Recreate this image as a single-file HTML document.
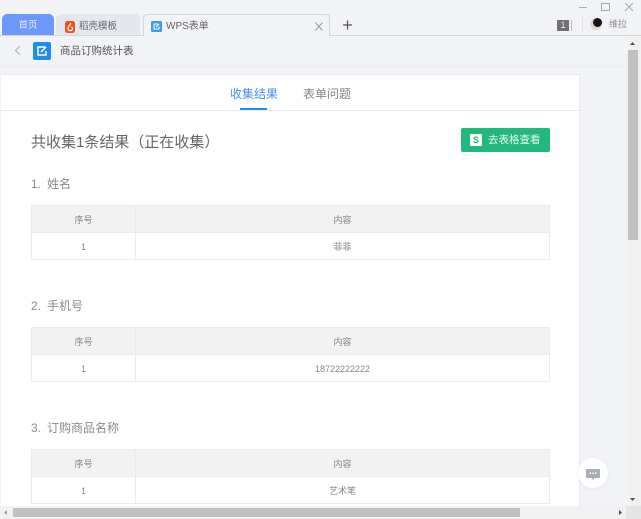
<!DOCTYPE html>
<html lang="zh">
<head>
<meta charset="utf-8">
<style>
html,body{margin:0;padding:0;width:641px;height:519px;overflow:hidden;background:#f2f3f7}
body{position:relative;font-family:"Liberation Sans","Noto Sans CJK SC",sans-serif;color:#666;filter:blur(.3px)}
.a{position:absolute;white-space:nowrap}
.t{position:absolute;left:31px;width:517px;height:53px;border:1px solid #eaebf2;background:#fff;box-sizing:content-box}
.t .h{position:absolute;left:0;top:0;width:100%;height:26px;background:#f2f2f2;border-bottom:1px solid #eaebf2}
.t .v{position:absolute;left:103px;top:0;width:1px;height:100%;background:#eaebf2}
.t .c{position:absolute;text-align:center;font-size:9px;color:#858585;line-height:12px}
.q{position:absolute;left:31px;font-size:12px;line-height:16px;color:#8a8a8a;white-space:nowrap}
.q span{display:inline-block;width:16px}
</style>
</head>
<body>
<!-- tab bar -->
<div class="a" style="left:0;top:35px;width:641px;height:1px;background:#d3d5da"></div>
<div class="a" style="left:2px;top:14px;width:52px;height:21px;background:#6c97fd;border-radius:5px 5px 0 0;color:#e6edff;font-size:9.500px;line-height:24px;text-align:center">首页</div>
<div class="a" style="left:56px;top:14px;width:84px;height:21px;background:#e4e7ee;border-radius:5px 5px 0 0"></div>
<svg class="a" style="left:65px;top:21px" width="10" height="12" viewBox="0 0 10 12"><rect width="10" height="12" rx="2.500" fill="#f0501e"/><path d="M5.500 2C6 4 3 5 3 7.500A2.300 2.300 0 0 0 7.500 8C7.500 6.500 6.500 6 6.500 6" fill="none" stroke="#fff" stroke-width="1.300"/></svg>
<div class="a" style="left:79px;top:21px;font-size:9.500px;line-height:12px;color:#666">稻壳模板</div>
<div class="a" style="left:143px;top:14px;width:187px;height:22px;background:#f2f3f7;border:1px solid #d3d5da;border-bottom:0;border-radius:4px 4px 0 0;box-sizing:border-box"></div>
<svg class="a" style="left:151px;top:21px" width="11" height="11" viewBox="0 0 11 11"><rect width="11" height="11" rx="1.500" fill="#3d9bf0"/><path d="M7 3H3V8H8V5.500M5 6L8 3" fill="none" stroke="#fff" stroke-width="1"/></svg>
<div class="a" style="left:166px;top:20px;font-size:10px;line-height:13px;color:#666">WPS表单</div>
<svg class="a" style="left:315px;top:22px" width="8" height="9" viewBox="0 0 8 9"><path d="M.5.500L7.500 8.500M7.500.500L.5 8.500" stroke="#999" stroke-width="1"/></svg>
<svg class="a" style="left:343px;top:20px" width="9" height="10" viewBox="0 0 9 10"><path d="M4.500 .5V9.500M0 5H9" stroke="#555" stroke-width="1.200"/></svg>
<!-- window controls -->
<div class="a" style="left:579px;top:7px;width:8px;height:1px;background:#aaa"></div>
<div class="a" style="left:601px;top:3px;width:7px;height:6px;border:1px solid #aaa;box-sizing:content-box"></div>
<svg class="a" style="left:624px;top:2px" width="10" height="10" viewBox="0 0 10 10"><path d="M1 1L9 9M9 1L1 9" stroke="#aaa" stroke-width="1"/></svg>
<div class="a" style="left:557px;top:20px;width:12px;height:11px;background:#707070;color:#eee;font-size:9px;line-height:11px;text-align:center">1</div>
<div class="a" style="left:571px;top:20px;width:1px;height:11px;background:#bbb"></div>
<div class="a" style="left:582px;top:17px;width:1px;height:14px;background:#e0e1e6"></div>
<div class="a" style="left:590px;top:18px;width:12px;height:12px;border-radius:50%;background:#e8d4c8"></div>
<div class="a" style="left:593px;top:18px;width:9px;height:9px;border-radius:50%;background:#1a1222"></div>
<div class="a" style="left:609px;top:18px;font-size:9px;line-height:13px;color:#8f8f8f">维拉</div>
<!-- header -->
<svg class="a" style="left:14px;top:45px" width="7" height="11" viewBox="0 0 7 11"><path d="M6 1L1.500 5.500L6 10" fill="none" stroke="#aab0bb" stroke-width="1.200"/></svg>
<svg class="a" style="left:33px;top:42px" width="18" height="18" viewBox="0 0 18 18"><rect width="18" height="18" rx="2" fill="#1e8fee"/><path d="M12 5H5V13H13V9M8 10L13 5" fill="none" stroke="#fff" stroke-width="1.500"/></svg>
<div class="a" style="left:60px;top:44px;font-size:10.500px;line-height:14px;color:#555">商品订购统计表</div>
<div class="a" style="left:0;top:66px;width:627px;height:1px;background:#ebecf0"></div>
<!-- card -->
<div class="a" style="left:1px;top:74px;width:579px;height:432px;background:#fff;border-top:1px solid #e8e9ef;border-right:1px solid #e8e9ef;box-sizing:border-box"></div>
<div class="a" style="left:1px;top:110px;width:578px;height:1px;background:#e8e9f0"></div>
<div class="a" style="left:230px;top:85px;font-size:12px;line-height:18px;color:#4a90e8">收集结果</div>
<div class="a" style="left:240px;top:108px;width:27px;height:2px;background:#1e8fee"></div>
<div class="a" style="left:303px;top:85px;font-size:12px;line-height:18px;color:#858585">表单问题</div>
<div class="a" style="left:31px;top:133px;font-size:15px;line-height:20px;color:#666">共收集1条结果（正在收集）</div>
<div class="a" style="left:461px;top:128px;width:89px;height:24px;background:#22ba7c;border-radius:2px"></div>
<div class="a" style="left:470px;top:134px;width:12px;height:12px;background:#fff;border-radius:1px;color:#22ba7c;font-size:9px;font-weight:bold;line-height:12px;text-align:center">S</div>
<div class="a" style="left:488px;top:134px;font-size:10.500px;line-height:13px;color:#e9f8f1">去表格查看</div>

<div class="q" style="top:176px"><span>1.</span>姓名</div>
<div class="t" style="top:205px"><div class="h"></div><div class="v"></div>
<div class="c" style="left:0;width:103px;top:8px">序号</div><div class="c" style="left:104px;width:413px;top:8px">内容</div>
<div class="c" style="left:0;width:103px;top:35px">1</div><div class="c" style="left:104px;width:413px;top:35px">菲菲</div></div>

<div class="q" style="top:298px"><span>2.</span>手机号</div>
<div class="t" style="top:327px"><div class="h"></div><div class="v"></div>
<div class="c" style="left:0;width:103px;top:8px">序号</div><div class="c" style="left:104px;width:413px;top:8px">内容</div>
<div class="c" style="left:0;width:103px;top:35px">1</div><div class="c" style="left:104px;width:413px;top:35px">18722222222</div></div>

<div class="q" style="top:420px"><span>3.</span>订购商品名称</div>
<div class="t" style="top:449px"><div class="h"></div><div class="v"></div>
<div class="c" style="left:0;width:103px;top:8px">序号</div><div class="c" style="left:104px;width:413px;top:8px">内容</div>
<div class="c" style="left:0;width:103px;top:35px">1</div><div class="c" style="left:104px;width:413px;top:35px">艺术笔</div></div>

<!-- chat -->
<div class="a" style="left:578px;top:458px;width:30px;height:30px;border-radius:50%;background:#fff;box-shadow:0 1px 4px rgba(0,0,0,.06)"></div>
<svg class="a" style="left:586px;top:469px" width="14" height="11" viewBox="0 0 14 11"><path d="M1 0H13A1 1 0 0 1 14 1V8A1 1 0 0 1 13 9H8.500L7 11L5.500 9H1A1 1 0 0 1 0 8V1A1 1 0 0 1 1 0Z" fill="#a8aebd"/><rect x="3.500" y="3.500" width="1.500" height="1.500" fill="#fff"/><rect x="6.250" y="3.500" width="1.500" height="1.500" fill="#fff"/><rect x="9" y="3.500" width="1.500" height="1.500" fill="#fff"/></svg>

<!-- vertical scrollbar -->
<div class="a" style="left:627px;top:36px;width:14px;height:470px;background:#f1f1f1"></div>
<div class="a" style="left:628px;top:50px;width:10px;height:190px;background:#c1c1c1"></div>
<svg class="a" style="left:630px;top:42px" width="5" height="3"><path d="M2.500 0L5 3H0Z" fill="#505050"/></svg>
<svg class="a" style="left:630px;top:498px" width="5" height="3"><path d="M0 0H5L2.500 3Z" fill="#505050"/></svg>
<!-- horizontal scrollbar -->
<div class="a" style="left:0;top:506px;width:627px;height:13px;background:#f1f1f1"></div>
<div class="a" style="left:13px;top:508px;width:507px;height:9px;background:#c1c1c1"></div>
<div class="a" style="left:626px;top:506px;width:15px;height:13px;background:#e4e4e4"></div>
<svg class="a" style="left:4px;top:510px" width="3" height="5"><path d="M3 0V5L0 2.500Z" fill="#a0a0a0"/></svg>
<svg class="a" style="left:619px;top:510px" width="3" height="5"><path d="M0 0V5L3 2.500Z" fill="#505050"/></svg>
</body>
</html>
